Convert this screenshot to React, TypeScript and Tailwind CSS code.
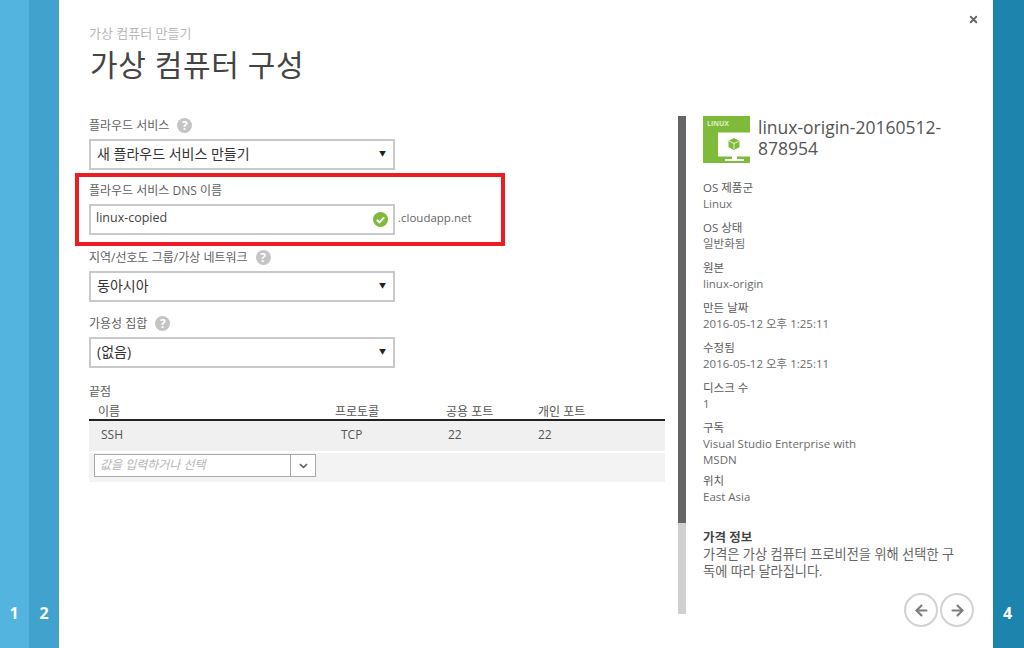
import { ArrowLeft, ArrowRight, X } from "lucide-react";

const font = "font-['Open_Sans','Noto_Sans_CJK_KR',sans-serif]";

const Help = () => (
  <span className="ml-2 flex h-[15px] w-[15px] items-center justify-center rounded-full bg-[#c4c4c4] text-[12px] font-bold leading-none text-white">
    ?
  </span>
);

const Field = ({ label, help, value, className }: { label: string; help?: boolean; value: string; className: string }) => (
  <div className={className}>
    <div className="flex h-[17px] items-center text-[12px] leading-[17px] text-[#5f5f5f]">
      {label}
      {help && <Help />}
    </div>
    <div className="mt-[5px] flex h-[31px] w-[306px] items-center justify-between border-2 border-[#c9c9c9] pl-[6px] pr-[7px] text-[14px] text-[#333]">
      <span className="mb-[3px]">{value}</span>
      <span className="text-[7px] text-[#222]">▼</span>
    </div>
  </div>
);

const Info = ({ label, value }: { label: string; value: string }) => (
  <div className="mb-[8px] text-[11.500px] leading-[16px]">
    <div className="text-[#5a5a5a]">{label}</div>
    <div className="text-[#6b6b6b]">{value}</div>
  </div>
);

const MachineTile = () => (
  <div className="relative h-[47px] w-[47px] shrink-0 bg-[#7fba3b]">
    <span className="absolute left-[4px] top-[2px] text-[7px] font-bold leading-[12px] text-[#dcefc4]">LINUX</span>
    <svg viewBox="0 0 47 47" className="absolute inset-0 h-[47px] w-[47px]">
      <rect x="16" y="17.500" width="30" height="22" fill="#fff" stroke="#fff" strokeWidth="2" />
      <path d="M29 40h5v4h-5z M22 43h19v2H22z" fill="#fff" />
      <path d="M31 22l5.500 2.800v6.400L31 34l-5.500-2.800v-6.400z" fill="#7fba3b" />
      <path d="M26 25l5 2.500 5-2.500 M31 27.500V33" fill="none" stroke="#fff" strokeWidth="0.800" />
    </svg>
  </div>
);

const RoundButton = ({ children }: { children: React.ReactNode }) => (
  <div className="flex h-[34px] w-[34px] items-center justify-center rounded-full border-2 border-[#d2d2d2] text-[#7d7d7d]">
    {children}
  </div>
);

const App = () => {
  return (
    <div className={`flex h-[648px] w-[1024px] overflow-hidden bg-white ${font}`}>
      <div className="flex w-[29px] items-end justify-center bg-[#52b4df] pb-[23px] pr-[1px] text-[16px] font-bold text-white">1</div>
      <div className="flex w-[30px] items-end justify-center bg-[#41a3cd] pb-[23px] text-[16px] font-bold text-white">2</div>

      <div className="relative flex w-[934px] flex-col">
        <X className="absolute right-[14px] top-[14px] h-[11px] w-[11px] text-[#666]" strokeWidth={4} />

        <div className="pl-[30px] pt-[25px]">
          <div className="text-[13px] leading-[16px] text-[#b8b8b8]">가상 컴퓨터 만들기</div>
          <h1 className="ml-[1px] mt-[2px] text-[30px] font-normal leading-[44px] tracking-[0.6px] text-[#444]">가상 컴퓨터 구성</h1>
        </div>

        <div className="flex pt-[29px]">
          <div className="relative w-[619px] pl-[30px]">
            <Field className="pt-[1px]" label="플라우드 서비스" help value="새 플라우드 서비스 만들기" />

            <div className="mt-[12px]">
              <div className="text-[12px] leading-[17px] text-[#5f5f5f]">플라우드 서비스 DNS 이름</div>
              <div className="mt-[5px] flex items-center">
                <div className="flex h-[31px] w-[306px] items-center justify-between border-2 border-[#c9c9c9] pb-[3px] pl-[5px] pr-[5px] text-[12.500px] text-[#444]">
                  <span>linux-copied</span>
                  <span className="mt-[3px] flex h-[15px] w-[15px] items-center justify-center rounded-full bg-[#7fba3b]">
                    <svg viewBox="0 0 15 15" className="h-[15px] w-[15px]">
                      <path d="M3.800 7.800l2.600 2.600 4.800-5" fill="none" stroke="#fff" strokeWidth="2" />
                    </svg>
                  </span>
                </div>
                <span className="mb-[3px] ml-[3px] text-[11.500px] text-[#666]">.cloudapp.net</span>
              </div>
            </div>

            <Field className="mt-[14px]" label="지역/선호도 그룹/가상 네트워크" help value="동아시아" />
            <Field className="mt-[13px]" label="가용성 집합" help value="(없음)" />

            <div className="mt-[15px] w-[576px]">
              <div className="text-[12px] leading-[17px] text-[#5f5f5f]">끝점</div>
              <div className="grid h-[21px] grid-cols-[237px_111px_92px_128px] border-b-2 border-[#222] pl-[9px] pt-[3px] text-[12px] leading-[18px] text-[#555]">
                <span>이름</span>
                <span>프로토콜</span>
                <span>공용 포트</span>
                <span>개인 포트</span>
              </div>
              <div className="grid h-[30px] grid-cols-[240px_107px_90px_126px] items-center bg-[#f0f0f0] pb-[2px] pl-[12px] text-[12px] text-[#555]">
                <span>SSH</span>
                <span>TCP</span>
                <span>22</span>
                <span>22</span>
              </div>
              <div className="mt-[2px] h-[29px] bg-[#f3f3f3] pl-[5px] pt-[1px]">
                <div className="flex h-[23px] w-[222px] border border-[#a9a9a9] bg-white">
                  <span className="flex-1 pl-[5px] text-[12px] italic leading-[20px] text-[#b5b5b5]">값을 입력하거나 선택</span>
                  <span className="flex w-[25px] items-center justify-center border-l border-[#a9a9a9]">
                    <svg viewBox="0 0 10 6" className="h-[6px] w-[9px]">
                      <path d="M1 1l4 3.500L9 1" fill="none" stroke="#666" strokeWidth="1.800" />
                    </svg>
                  </span>
                </div>
              </div>
            </div>

            <div className="pointer-events-none absolute left-[16px] top-[57px] h-[73px] w-[430px] border-4 border-[#ed1c24]" />
          </div>

          <div className="h-[498px] w-[8px] bg-[#cfcfcf]">
            <div className="h-[407px] bg-[#666]" />
          </div>

          <div className="relative flex-1 pl-[17px]">
            <div className="flex">
              <MachineTile />
              <div className="ml-[8px] mt-[1px] w-[210px] text-[17.500px] leading-[21px] text-[#555]">linux-origin-20160512-878954</div>
            </div>

            <div className="mt-[17px]">
              <Info label="OS 제품군" value="Linux" />
              <Info label="OS 상태" value="일반화됨" />
              <Info label="원본" value="linux-origin" />
              <Info label="만든 날짜" value="2016-05-12 오후 1:25:11" />
              <Info label="수정됨" value="2016-05-12 오후 1:25:11" />
              <Info label="디스크 수" value="1" />
              <div className="mb-[5px] text-[11.500px] leading-[16px]">
                <div className="text-[#5a5a5a]">구독</div>
                <div className="w-[165px] text-[#6b6b6b]">Visual Studio Enterprise with MSDN</div>
              </div>
              <Info label="위치" value="East Asia" />
            </div>

            <div className="mt-[24px] w-[258px] break-all leading-[17px] text-[#666]">
              <div className="text-[12.500px] font-bold text-[#444]">가격 정보</div>
              <div className="text-[13.200px]">가격은 가상 컴퓨터 프로비전을 위해 선택한 구독에 따라 달라집니다.</div>
            </div>

            <div className="absolute left-[218px] top-[477px] flex gap-[2px]">
              <RoundButton><ArrowLeft className="h-[17px] w-[17px]" strokeWidth={3} /></RoundButton>
              <RoundButton><ArrowRight className="h-[17px] w-[17px]" strokeWidth={3} /></RoundButton>
            </div>
          </div>
        </div>
      </div>

      <div className="flex flex-1 items-end justify-center bg-[#1c84ad] pb-[23px] pr-[2px] text-[16px] font-bold text-white">4</div>
    </div>
  );
};

export default App;
